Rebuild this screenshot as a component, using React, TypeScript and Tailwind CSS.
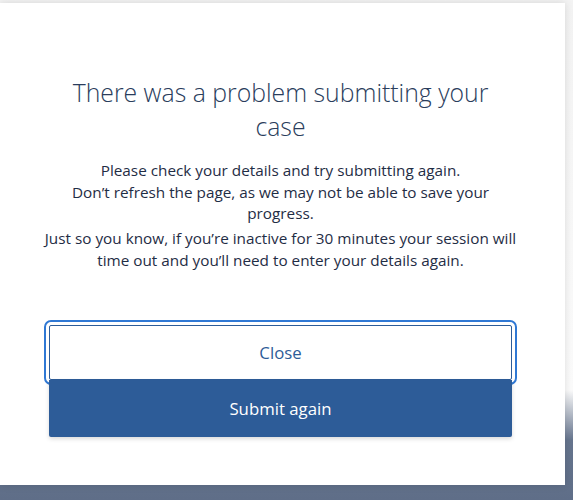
export default function App() {
  return (
    <div
      className="w-[573px] h-[500px] overflow-hidden pt-[3px] bg-[linear-gradient(to_bottom,#f3f3f3_0%,#fbfbfb_78%,#66758e_88%,#5f6e88_100%)]"
      style={{ fontFamily: '"Open Sans", "Noto Sans", sans-serif' }}
    >
      <div className="w-[565px] h-[482px] bg-white shadow-[0_0_8px_rgba(0,0,0,0.12)] flex flex-col items-center pt-[72px] pr-[4px]">
        <h2 className="max-w-[450px] text-center text-[24.8px] leading-[34px] font-light text-[#2a3d5c]">
          There was a problem submitting your case
        </h2>

        <p className="mt-[17px] max-w-[440px] text-center text-[15.3px] leading-[21.5px] text-[#1f2d45]">
          <span className="block">Please check your details and try submitting again.</span>
          Don’t refresh the page, as we may not be able to save your progress.
        </p>
        <p className="mt-[3.5px] max-w-[492px] text-center text-[15.3px] leading-[21.5px] text-[#1f2d45]">
          Just so you know, if you’re inactive for 30 minutes your session will time out and you’ll need to enter your details again.
        </p>

        <div className="mt-[54px] w-[463px] flex flex-col">
          <button className="h-[55px] w-full bg-white border border-[#2d5c98] rounded-[2px] text-[16.8px] text-[#2d5c98] outline-2 outline-[#2f78d4] outline-offset-[3px]">
            Close
          </button>
          <button className="relative z-10 h-[57px] w-full bg-[#2d5c98] rounded-b-[2px] text-[16.8px] text-white shadow-[0_2px_4px_rgba(0,0,0,0.15)]">
            Submit again
          </button>
        </div>
      </div>
    </div>
  );
}
